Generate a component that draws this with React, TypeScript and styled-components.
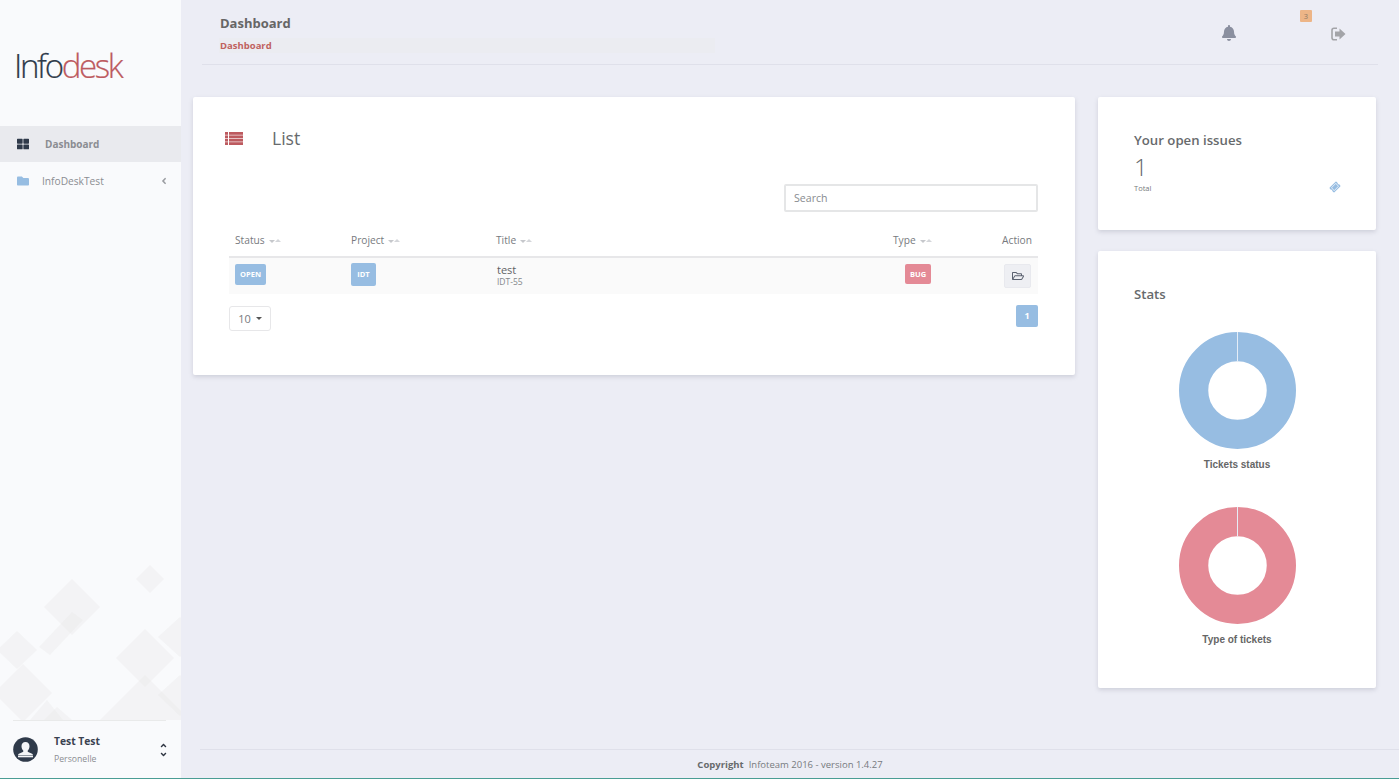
import React from "react";
import styled, { createGlobalStyle } from "styled-components";
import {
  FaAngleDown,
  FaAngleLeft,
  FaAngleUp,
  FaBell,
  FaFolder,
  FaRegFolderOpen,
  FaThLarge,
  FaTicketAlt,
} from "react-icons/fa";

const blue = "#97bde2";
const red = "#e48a96";
const brand = "#bd5a5f";

const GlobalStyle = createGlobalStyle`
  html, body {
    margin: 0;
    padding: 0;
    height: 100%;
    overflow: hidden;
  }
  body {
    font-family: "Open Sans", "Liberation Sans", sans-serif;
    color: #676a6c;
  }
`;

const Page = styled.div`
  display: flex;
  width: 1399px;
  height: 779px;
  box-sizing: border-box;
  background-color: #ecedf5;
  border-bottom: 1px solid #4a9d94;
`;

// Sidebar
const Sidebar = styled.aside`
  width: 181px;
  flex: none;
  display: flex;
  flex-direction: column;
  background-color: #f9fafc;
`;

const LogoBox = styled.div`
  height: 126px;
  display: flex;
  align-items: center;
  padding-left: 14px;
  padding-top: 4px;
  box-sizing: border-box;
`;

const Logo = styled.div`
  font-size: 33px;
  font-weight: 300;
  letter-spacing: -2.35px;
  color: #2f3a4a;
  line-height: 1;
  -webkit-text-stroke: 0.2px currentColor;

  span {
    color: ${brand};
  }
`;

const NavItem = styled.div<{ $active?: boolean }>`
  height: 36px;
  box-sizing: border-box;
  display: flex;
  align-items: center;
  margin-bottom: 1px;
  padding: 0 12px 1px 17px;
  font-size: ${(p) => (p.$active ? 10 : 10.2)}px;
  color: #8b8d92;
  font-weight: ${(p) => (p.$active ? 700 : 400)};
  background-color: ${(p) => (p.$active ? "#e9eaee" : "transparent")};
`;

const NavIcon = styled.span<{ $color: string; $gap: number }>`
  display: flex;
  color: ${(p) => p.$color};
  font-size: 12px;
  margin-right: ${(p) => p.$gap}px;
`;

const NavCaret = styled.span`
  margin-left: auto;
  display: flex;
  font-size: 10px;
  color: #9a9ca1;
`;

const SidebarArt = styled.div`
  flex: 1;
  display: flex;
  align-items: flex-end;
  overflow: hidden;
`;

const UserBox = styled.div`
  margin: 0 15px 0 13px;
  height: 57px;
  border-top: 1px solid #e9eaea;
  display: flex;
  align-items: center;
`;

const UserText = styled.div`
  margin-left: 16px;
`;

const UserName = styled.div`
  font-size: 10.3px;
  font-weight: 700;
  color: #3a4250;
  line-height: 15px;
`;

const UserRole = styled.div`
  font-size: 8.7px;
  color: #8b8d92;
  margin-top: 4px;
  line-height: 13px;
`;

const UserSort = styled.div`
  margin-left: auto;
  display: flex;
  flex-direction: column;
  font-size: 9px;
  line-height: 0;
  color: #2f3542;
  margin-right: -2px;
`;

// Main column
const Main = styled.main`
  flex: 1;
  min-width: 0;
  display: flex;
  flex-direction: column;
`;

const TopBar = styled.header`
  height: 65px;
  margin: 0 21px;
  box-sizing: border-box;
  border-bottom: 1px solid #dfe0ea;
  display: flex;
  padding-left: 17px;
  position: relative;
`;

const TopTitles = styled.div`
  padding-top: 14px;
`;

const PageTitle = styled.div`
  font-size: 13px;
  font-weight: 700;
  line-height: 19px;
  padding-left: 1px;
  color: #666;
`;

const Breadcrumb = styled.div`
  width: 495px;
  margin-top: 5px;
  padding-left: 1px;
  font-size: 9.5px;
  font-weight: 700;
  line-height: 15px;
  color: #c0625f;
  background-color: #ebecf1;
`;

const TopIcons = styled.div`
  margin-left: auto;
  display: flex;
  padding-top: 25px;
  padding-right: 32px;
`;

const TopIcon = styled.span<{ $gap?: number; $drop?: number }>`
  display: flex;
  font-size: 16px;
  height: 16px;
  color: #8a8f9f;
  margin-left: ${(p) => p.$gap ?? 0}px;
  margin-top: ${(p) => p.$drop ?? 0}px;
`;

const CountBadge = styled.span`
  position: absolute;
  left: 1098px;
  top: 10px;
  width: 12px;
  height: 12px;
  border-radius: 1px;
  background-color: #edb587;
  color: #8d7a66;
  font-size: 7.5px;
  line-height: 12px;
  text-align: center;
`;

const Content = styled.div`
  flex: 1;
  display: flex;
  align-items: flex-start;
  gap: 23px;
  padding: 32px 23px 0 12px;
`;

const Card = styled.section`
  background-color: #fff;
  border-radius: 2px;
  box-shadow: 0 2px 4px rgba(120, 122, 140, 0.25);
`;

const ListCard = styled(Card)`
  flex: 1;
  height: 278px;
  box-sizing: border-box;
  padding: 0 37px 0 36px;
`;

const ListHeading = styled.div`
  height: 87px;
  display: flex;
  align-items: flex-start;
  padding-top: 30px;
  box-sizing: border-box;
  margin-left: -4px;
`;

const ListIconBox = styled.span`
  display: flex;
  width: 47px;
  height: 22px;
  align-items: center;
  color: ${brand};
`;

const ListTitle = styled.h2`
  margin: 0;
  font-size: 17.6px;
  font-weight: 400;
  line-height: 22px;
  color: #676a6c;
`;

const SearchRow = styled.div`
  display: flex;
  justify-content: flex-end;
  height: 42px;
`;

const SearchInput = styled.input`
  width: 254px;
  height: 28px;
  box-sizing: border-box;
  border: 2px solid #e5e6e7;
  border-radius: 2px;
  padding: 0 8px 1px;
  font-family: inherit;
  font-size: 10.6px;
  outline: none;

  &::placeholder {
    color: #888b8f;
    opacity: 1;
  }
`;

const Table = styled.table`
  width: 100%;
  table-layout: fixed;
  border-collapse: collapse;
`;

const HeadCell = styled.th<{ $right?: boolean }>`
  height: 31px;
  padding: 0 6px 3px;
  box-sizing: border-box;
  border-bottom: 2px solid #e7e7e9;
  font-size: 10.2px;
  font-weight: 400;
  color: #777a7e;
  text-align: ${(p) => (p.$right ? "right" : "left")};
`;

const SortMark = styled.span`
  display: inline-block;
  margin-left: 4px;
  vertical-align: 1px;
  width: 0;
  height: 0;
  border-left: 3px solid transparent;
  border-right: 3px solid transparent;
  border-top: 3px solid #c6c8cc;

  & + & {
    margin-left: 0;
    border-top: 0;
    border-bottom: 3px solid #d4d6da;
    vertical-align: 2px;
  }
`;

const Row = styled.tr`
  height: 37px;
  background-color: #fafafa;
`;

const Cell = styled.td<{ $align?: string; $pad?: number }>`
  padding: 0 ${(p) => p.$pad ?? 6}px 0 6px;
  text-align: ${(p) => p.$align ?? "left"};
`;

const Tag = styled.span<{ $color: string; $w: number; $h: number }>`
  display: inline-block;
  width: ${(p) => p.$w}px;
  height: ${(p) => p.$h}px;
  line-height: ${(p) => p.$h}px;
  margin-bottom: 4px;
  vertical-align: middle;
  text-align: center;
  border-radius: 2px;
  background-color: ${(p) => p.$color};
  color: #fff;
  font-size: 7.5px;
  font-weight: 700;
`;

const TitleMain = styled.div`
  font-size: 11px;
  line-height: 13px;
  color: #5f6265;
  padding-left: 1px;
`;

const TitleSub = styled.div`
  font-size: 8.5px;
  line-height: 11px;
  color: #84878b;
  padding-left: 1px;
  padding-bottom: 2px;
`;

const OpenButton = styled.button`
  width: 27px;
  height: 24px;
  padding: 0;
  border: 1px solid #e8e9ee;
  border-radius: 2px;
  background-color: #eeeff3;
  color: #5b6270;
  font-size: 12px;
  display: inline-flex;
  align-items: center;
  justify-content: center;
  vertical-align: middle;
`;

const TableFoot = styled.div`
  display: flex;
  justify-content: space-between;
  align-items: flex-start;
  padding-top: 11px;
`;

const PageSize = styled.div`
  width: 42px;
  height: 25px;
  margin-top: 1px;
  box-sizing: border-box;
  border: 1px solid #e7e7e9;
  border-radius: 3px;
  display: flex;
  align-items: center;
  justify-content: center;
  gap: 5px;
  font-size: 11px;
  color: #777a7e;

  &::after {
    content: "";
    border-left: 3px solid transparent;
    border-right: 3px solid transparent;
    border-top: 3px solid #555;
  }
`;

const PageButton = styled.div`
  width: 22px;
  height: 22px;
  border-radius: 2px;
  background-color: ${blue};
  color: #fff;
  font-size: 9px;
  font-weight: 700;
  line-height: 22px;
  text-align: center;
`;

const SideColumn = styled.div`
  width: 278px;
  flex: none;
  display: flex;
  flex-direction: column;
  gap: 21px;
`;

const IssuesCard = styled(Card)`
  height: 133px;
  box-sizing: border-box;
  padding: 34px 36px 0;
`;

const CardTitle = styled.h3`
  margin: 0;
  font-size: 13.2px;
  font-weight: 600;
  line-height: 19px;
  color: #676a6c;
`;

const IssueCount = styled.div`
  font-size: 24px;
  font-weight: 300;
  line-height: 26px;
  margin-top: 4px;
  color: #676a6c;
`;

const IssueFoot = styled.div`
  display: flex;
  justify-content: space-between;
  align-items: flex-start;
  font-size: 7.5px;
  line-height: 11px;
  margin-top: 3px;
  color: #777a7e;
`;

const TicketIcon = styled.span`
  display: flex;
  font-size: 10px;
  margin-top: -1px;
  color: ${blue};
  transform: rotate(-45deg);
`;

const StatsCard = styled(Card)`
  height: 437px;
  box-sizing: border-box;
  padding: 34px 36px 0;
`;

const Chart = styled.figure`
  margin: 0;
  display: flex;
  flex-direction: column;
  align-items: center;
`;

const ChartList = styled.div`
  margin-top: 28px;
  display: flex;
  flex-direction: column;
  gap: 36px;
`;

const ChartLabel = styled.figcaption`
  font-family: "Liberation Sans", Arial, sans-serif;
  font-size: 10px;
  font-weight: 700;
  line-height: 12px;
  margin-top: 10px;
  color: #666;
`;

const Footer = styled.footer`
  margin-left: 19px;
  padding-right: 19px;
  height: 29px;
  box-sizing: border-box;
  border-top: 1px solid #dfe0ea;
  display: flex;
  justify-content: center;
  align-items: center;
  font-size: 9.5px;
  color: #777a7e;

  strong {
    font-weight: 700;
    margin-right: 5px;
    color: #676a6c;
  }
`;

const Donut: React.FC<{ color: string }> = ({ color }) => (
  <svg width="117" height="117" viewBox="0 0 118 118">
    <circle cx="59" cy="59" r="44.25" fill="none" stroke={color} strokeWidth="29.5" />
    <line x1="59" y1="0" x2="59" y2="29.5" stroke="#e6eef7" strokeWidth="1" />
  </svg>
);

const Avatar: React.FC = () => (
  <svg width="25" height="25" viewBox="0 0 25 25">
    <circle cx="12.5" cy="12.5" r="12.3" fill="#2f3a4a" />
    <path
      d="M12.5 5c-2.6 0-4 1.9-4 4.3 0 1.8.8 3.2 1.7 4.2.3.5.2 1.2-.4 1.5l-3.3 1.4c-.9.4-1.5 1-1.5 2h15c0-1-.6-1.6-1.5-2L15.2 15c-.6-.3-.7-1-.4-1.5.9-1 1.7-2.4 1.7-4.2C16.5 6.9 15.1 5 12.5 5z"
      fill="#f4f5f7"
    />
    <path d="M5 19h15v1.3H5z" fill="#f4f5f7" />
  </svg>
);

const ExitIcon: React.FC = () => (
  <svg width="15" height="14" viewBox="0 0 15 14">
    <path
      d="M6 1.2H3C1.9 1.2 1 2.1 1 3.2v7.600c0 1.100.9 2 2 2h3"
      fill="none"
      stroke="#a3a4a8"
      strokeWidth="1.6"
    />
    <path d="M4 4.500h4.500V1.500L14.500 7 8.500 12.500V9.500H4z" fill="#a3a4a8" />
  </svg>
);

// Solid four-row list glyph next to the card title
const ListGlyph: React.FC = () => (
  <svg width="18" height="13" viewBox="0 0 18 13" fill="currentColor">
    {[0, 3.4, 6.8, 10.2].map((y) => (
      <React.Fragment key={y}>
        <rect x="0" y={y} width="3" height="2.8" />
        <rect x="4" y={y} width="14" height="2.8" />
      </React.Fragment>
    ))}
  </svg>
);

// Faded diamonds behind the bottom of the sidebar
const diamonds = [
  "150,565 164,579 150,593 136,579",
  "72,579 100,607 72,635 44,607",
  "72,612 83,620 50,655 39,647",
  "17,631 37,650 17,669 -3,650",
  "145,629 174,658 145,687 116,658",
  "180,617 200,637 180,657 158,637",
  "23,664 52,693 23,722 -6,693",
  "145,675 190,720 100,720",
  "180,675 200,695 180,716 158,695",
  "47,700 63,720 30,720",
  "57,707 72,720 44,720",
];

const SidebarPattern: React.FC = () => (
  <svg width="181" height="160" viewBox="0 560 181 160">
    {diamonds.map((points) => (
      <polygon key={points} points={points} fill="#e6e7e7" opacity="0.33" />
    ))}
  </svg>
);

const columns = [116, 145, 397, 62, 89];

const Sort: React.FC = () => (
  <>
    <SortMark />
    <SortMark />
  </>
);

const App: React.FC = () => {
  return (
    <Page>
      <GlobalStyle />
      <Sidebar>
        <LogoBox>
          <Logo>
            Info<span>desk</span>
          </Logo>
        </LogoBox>
        <NavItem $active>
          <NavIcon $color="#2f3a4a" $gap={16}>
            <FaThLarge />
          </NavIcon>
          Dashboard
        </NavItem>
        <NavItem>
          <NavIcon $color={blue} $gap={13}>
            <FaFolder />
          </NavIcon>
          InfoDeskTest
          <NavCaret>
            <FaAngleLeft />
          </NavCaret>
        </NavItem>
        <SidebarArt>
          <SidebarPattern />
        </SidebarArt>
        <UserBox>
          <Avatar />
          <UserText>
            <UserName>Test Test</UserName>
            <UserRole>Personelle</UserRole>
          </UserText>
          <UserSort>
            <FaAngleUp />
            <FaAngleDown />
          </UserSort>
        </UserBox>
      </Sidebar>
      <Main>
        <TopBar>
          <TopTitles>
            <PageTitle>Dashboard</PageTitle>
            <Breadcrumb>Dashboard</Breadcrumb>
          </TopTitles>
          <TopIcons>
            <TopIcon>
              <FaBell />
            </TopIcon>
            <TopIcon $gap={94} $drop={2}>
              <ExitIcon />
            </TopIcon>
          </TopIcons>
          <CountBadge>3</CountBadge>
        </TopBar>
        <Content>
          <ListCard>
            <ListHeading>
              <ListIconBox>
                <ListGlyph />
              </ListIconBox>
              <ListTitle>List</ListTitle>
            </ListHeading>
            <SearchRow>
              <SearchInput placeholder="Search" readOnly />
            </SearchRow>
            <Table>
              <colgroup>
                {columns.map((w, i) => (
                  <col key={i} width={w} />
                ))}
              </colgroup>
              <thead>
                <tr>
                  <HeadCell>
                    Status
                    <Sort />
                  </HeadCell>
                  <HeadCell>
                    Project
                    <Sort />
                  </HeadCell>
                  <HeadCell>
                    Title
                    <Sort />
                  </HeadCell>
                  <HeadCell>
                    Type
                    <Sort />
                  </HeadCell>
                  <HeadCell $right>Action</HeadCell>
                </tr>
              </thead>
              <tbody>
                <Row>
                  <Cell>
                    <Tag $color={blue} $w={31} $h={21}>
                      OPEN
                    </Tag>
                  </Cell>
                  <Cell>
                    <Tag $color={blue} $w={25} $h={23}>
                      IDT
                    </Tag>
                  </Cell>
                  <Cell>
                    <TitleMain>test</TitleMain>
                    <TitleSub>IDT-55</TitleSub>
                  </Cell>
                  <Cell $align="center">
                    <Tag $color={red} $w={26} $h={20}>
                      BUG
                    </Tag>
                  </Cell>
                  <Cell $align="right" $pad={7}>
                    <OpenButton>
                      <FaRegFolderOpen />
                    </OpenButton>
                  </Cell>
                </Row>
              </tbody>
            </Table>
            <TableFoot>
              <PageSize>10</PageSize>
              <PageButton>1</PageButton>
            </TableFoot>
          </ListCard>
          <SideColumn>
            <IssuesCard>
              <CardTitle>Your open issues</CardTitle>
              <IssueCount>1</IssueCount>
              <IssueFoot>
                Total
                <TicketIcon>
                  <FaTicketAlt />
                </TicketIcon>
              </IssueFoot>
            </IssuesCard>
            <StatsCard>
              <CardTitle>Stats</CardTitle>
              <ChartList>
                <Chart>
                  <Donut color={blue} />
                  <ChartLabel>Tickets status</ChartLabel>
                </Chart>
                <Chart>
                  <Donut color={red} />
                  <ChartLabel>Type of tickets</ChartLabel>
                </Chart>
              </ChartList>
            </StatsCard>
          </SideColumn>
        </Content>
        <Footer>
          <strong>Copyright</strong> Infoteam 2016 - version 1.4.27
        </Footer>
      </Main>
    </Page>
  );
};

export default App;
